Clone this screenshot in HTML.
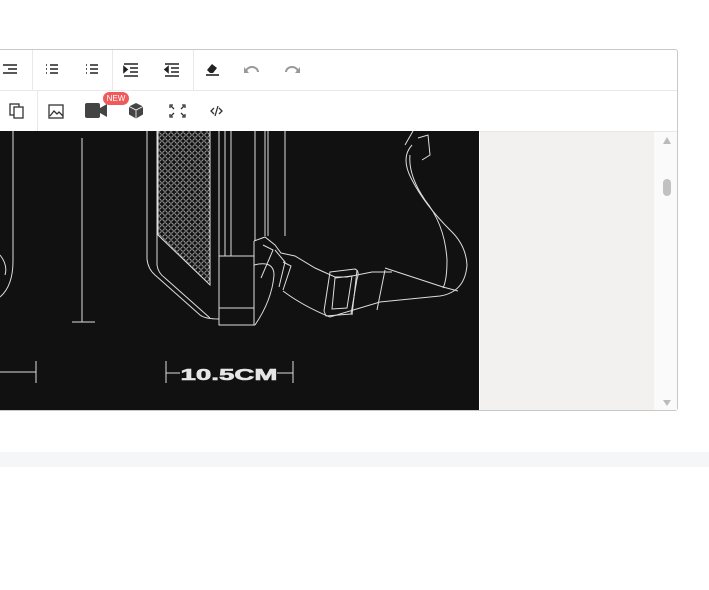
<!DOCTYPE html>
<html><head><meta charset="utf-8"><style>
html,body{margin:0;padding:0;background:#fff;width:709px;height:590px;overflow:hidden;font-family:"Liberation Sans",sans-serif}
.ed{position:absolute;left:-5px;top:49px;width:681px;height:360px;border:1px solid #c8c8c8;border-radius:3px;background:#fff}
.row{position:absolute;left:0;right:0;height:40px;border-bottom:1px solid #e8e8e8}
.sep{position:absolute;width:1px;background:#e8e8e8}
.badge{position:absolute;left:103px;top:92px;width:26px;height:13px;border-radius:7px;background:#ef5b5b;color:#fff;font-size:8px;line-height:13px;text-align:center}
.band{position:absolute;left:0;top:452px;width:709px;height:15px;background:#f5f6f7}
</style></head><body>
<div class="ed">
 <div class="row" style="top:0"></div>
 <div class="row" style="top:41px"></div>
 <div class="sep" style="left:36px;top:0;height:40px"></div>
 <div class="sep" style="left:116px;top:0;height:40px"></div>
 <div class="sep" style="left:197px;top:0;height:40px"></div>
 <div class="sep" style="left:41px;top:41px;height:40px"></div>
 <div style="position:absolute;left:484px;top:82px;width:174px;height:278px;background:#f3f1ef"></div>
 <div style="position:absolute;left:658px;top:82px;width:23px;height:278px;background:#fafafa"></div>
</div>
<svg width="709" height="590" style="position:absolute;left:0;top:0" xmlns="http://www.w3.org/2000/svg">
<defs><pattern id="m" width="6" height="6" patternUnits="userSpaceOnUse"><circle cx="3" cy="3" r="2.2" fill="none" stroke="#aaa" stroke-width=".9"/></pattern></defs>
<g stroke="#222" stroke-width="1.6" fill="none">
 <path d="M3 65h14M8 69h9M3 73h14"/>
 <path d="M46 65h1M50 65h8M46 69h1M50 69h8M46 73h1M50 73h8"/>
 <path d="M86 65h1M90 65h8M86 69h1M90 69h8M86 73h1M90 73h8"/>
 <path d="M124 64h14M130 68h8M130 72h8M124 76h14"/><path d="M124 67l3 2.5-3 2.5z" fill="#222"/>
 <path d="M165 64h14M171 68h8M171 72h8M165 76h14"/><path d="M168 67l-3 2.5 3 2.5z" fill="#222"/>
 <path d="M206 75h13"/>
</g>
<path d="M207 70l5-6 5 4-4 5h-3z" fill="#222"/>
<path d="M246 72a6 5 0 0 1 12 0" stroke="#999" stroke-width="2" fill="none"/><path d="M244 67v6h5z" fill="#999"/>
<path d="M286 72a6 5 0 0 1 12 0" stroke="#999" stroke-width="2" fill="none"/><path d="M300 67v6h-5z" fill="#999"/>
<g stroke="#333" stroke-width="1.3" fill="none">
 <rect x="10" y="104" width="9" height="11"/><rect x="14" y="107" width="9" height="11" fill="#fff"/>
 <rect x="49" y="105" width="14" height="13"/><path d="M50 116l4-5 3 3 2-2 4 4"/>
 <path d="M170 108v-3h3M182 105h3v3M170 114v3h3M185 114v3h-3M171 106l3 3M184 106l-3 3M171 116l3-3M184 116l-3-3"/>
 <path d="M214 108l-3 3 3 3M219 108l3 3-3 3M218 106l-3 10"/>
</g>
<rect x="85" y="103" width="15" height="15" rx="2" fill="#444"/><path d="M100 108l7-4v13l-7-4z" fill="#444"/>
<path d="M136 103l7 3.5v8l-7 4-7-4v-8z" fill="#444"/><path d="M129 106.5l7 3.5 7-3.5M136 110v8" stroke="#fff" stroke-width=".8" fill="none"/>
<rect x="0" y="131" width="479" height="279" fill="#111"/>
<rect x="158" y="131" width="52" height="154" fill="url(#m)"/>
<polygon points="158,235 210,285 210,300 150,300 150,235" fill="#111"/>
<g stroke="#ddd" stroke-width="1" fill="none">
 <path d="M13 131v130q0 25-13 36"/><path d="M0 255q8 10 5 20"/>
 <path d="M82 138v184M72 322h23"/>
 <path d="M0 372h36M36 361v22"/>
 <path d="M166 361v22M293 361v22M166 373h14M277 373h16"/>
 <path d="M147 131v128q1 10 8 16l45 40q5 4 19 4"/>
 <path d="M157 131v134q1 8 8 13l45 40"/>
 <path d="M158 131v104l52 50v-154"/>
 <path d="M219 131v194h36M225 131v125M231 131v125M219 256h35M219 308h35M254 241v84"/>
 <path d="M255 131v110M265 131v105M268 131v105M285 131v105"/>
 <path d="M254 241l11-4 10 8 6 8 14 3 20 12 20 9 12 0 25-5 20 0"/>
 <path d="M254 265q20 -5 20 10q-2 25-19 50"/>
 <path d="M283 291q20 15 47 26L380 302L440 296Q465 292 467 265Q466 245 450 230Q425 205 412 180Q400 158 412 145"/>
 <path d="M410 155Q408 175 425 200Q445 225 447 260Q447 280 443 288"/>
 <path d="M385 268L443 287L458 291"/>
 <path d="M405 145l8-14M418 138l10-3 2 20-8 5"/>
 <path d="M263 245l10 5-12 28M275 250l10 12-6 25M283 262l8 4-8 24"/>
 <path d="M330 272l25 -3q5 2 2 10l-6 35-25 2-2-5z"/><path d="M335 278l17-2-5 32-15 1z"/>
 <path d="M357 270l-5 45M385 270l-8 40"/>
</g>
<text x="229" y="380" text-anchor="middle" fill="#e6e6e6" stroke="#e6e6e6" stroke-width=".6" font-family="Liberation Sans" font-weight="bold" font-size="16" textLength="97" lengthAdjust="spacingAndGlyphs">10.5CM</text>
<path d="M663 144l4-7 4 7z" fill="#bbb"/><path d="M663 400l4 6 4-6z" fill="#bbb"/>
<rect x="663" y="179" width="8" height="17" rx="4" fill="#c1c1c1"/>
</svg>
<div class="badge">NEW</div>
<div class="band"></div>
</body></html>
